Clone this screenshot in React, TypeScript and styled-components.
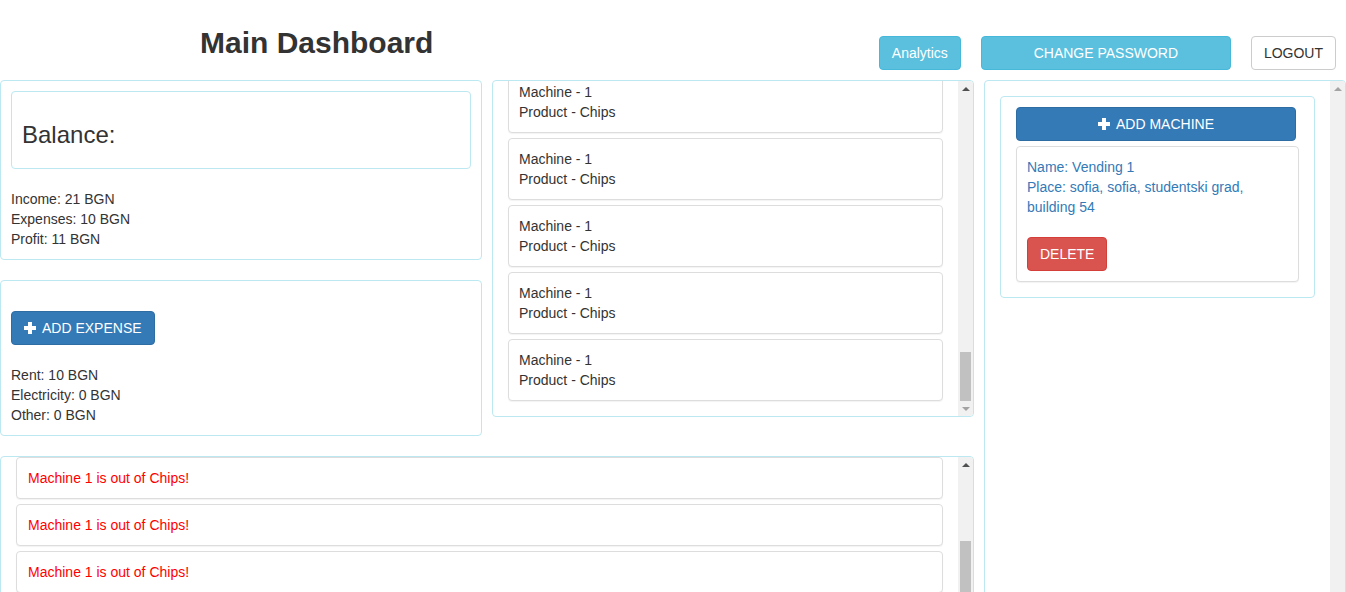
import React, { useLayoutEffect, useRef, useState } from "react";
import styled, { createGlobalStyle, css } from "styled-components";

const GlobalStyle = createGlobalStyle`
  html, body {
    margin: 0;
    padding: 0;
    overflow: hidden;
    background: #fff;
  }
  body {
    font-family: "Liberation Sans", Arial, sans-serif;
    font-size: 14px;
    line-height: 20px;
    color: #333;
  }
  * { box-sizing: border-box; }
`;

const Page = styled.div`
  width: 1346px;
`;

const Header = styled.header`
  display: flex;
  align-items: flex-start;
  height: 80px;
  padding-right: 10px;
`;

const Title = styled.h2`
  margin: 26px 0 0 200px;
  font-size: 30px;
  line-height: 33px;
  font-weight: bold;
  color: #333;
`;

const Actions = styled.div`
  margin-left: auto;
  margin-top: 36px;
  display: flex;
  gap: 20px;
`;

type Variant = "info" | "primary" | "danger" | "default";

const variants: Record<Variant, ReturnType<typeof css>> = {
  info: css`
    background: #5bc0de;
    border-color: #46b8da;
    color: #fff;
  `,
  primary: css`
    background: #337ab7;
    border-color: #2e6da4;
    color: #fff;
  `,
  danger: css`
    background: #d9534f;
    border-color: #d43f3a;
    color: #fff;
  `,
  default: css`
    background: #fff;
    border-color: #ccc;
    color: #333;
  `,
};

const Button = styled.button<{ $variant: Variant; $width?: number }>`
  display: inline-flex;
  align-items: center;
  justify-content: center;
  gap: 6px;
  height: 34px;
  padding: 6px 12px;
  border: 1px solid;
  border-radius: 4px;
  font-family: "Liberation Sans", Arial, sans-serif;
  font-size: 14px;
  line-height: 20px;
  cursor: pointer;
  white-space: nowrap;
  ${(p) => variants[p.$variant]}
  ${(p) => (p.$width ? `width: ${p.$width}px;` : "")}
`;

const Main = styled.div`
  display: grid;
  grid-template-columns: 974px 362px;
  gap: 10px;
  align-items: start;
`;

const LeftArea = styled.div`
  display: flex;
  flex-direction: column;
  gap: 20px;
`;

const TopRow = styled.div`
  display: grid;
  grid-template-columns: 482px 482px;
  gap: 10px;
  align-items: start;
`;

const Column = styled.div`
  display: flex;
  flex-direction: column;
  gap: 20px;
`;

const Panel = styled.section`
  border: 1px solid #bce8f1;
  border-radius: 4px;
  padding: 10px;
`;

const BalanceBox = styled.div`
  border: 1px solid #bce8f1;
  border-radius: 4px;
  padding: 30px 10px 20px;
`;

const BalanceTitle = styled.h3`
  margin: 0;
  font-size: 24px;
  line-height: 26px;
  font-weight: normal;
`;

const Lines = styled.div`
  margin-top: 20px;
`;

const Line = styled.div`
  line-height: 20px;
`;

const ExpenseButtonRow = styled.div`
  margin-top: 20px;
`;

/* ---------- scroll panel with a drawn classic scrollbar ---------- */

const ScrollFrame = styled.section<{ $height: number }>`
  border: 1px solid #bce8f1;
  border-radius: 4px;
  height: ${(p) => p.$height}px;
  display: flex;
  overflow: hidden;
`;

const Viewport = styled.div`
  flex: 1;
  min-width: 0;
  overflow: hidden;
`;

const ScrollBar = styled.div`
  flex: none;
  width: 15px;
  background: #f1f1f1;
  display: flex;
  flex-direction: column;
`;

const ArrowButton = styled.div<{ $disabled: boolean }>`
  flex: none;
  height: 15px;
  display: flex;
  align-items: center;
  justify-content: center;
  color: ${(p) => (p.$disabled ? "#a3a3a3" : "#505050")};
`;

const Track = styled.div`
  flex: 1;
  position: relative;
`;

const Thumb = styled.div`
  position: absolute;
  left: 2px;
  right: 2px;
  background: #c1c1c1;
`;

const Arrow = ({ dir }: { dir: "up" | "down" }) => (
  <svg width="8" height="4" viewBox="0 0 8 4" aria-hidden="true">
    <polygon points={dir === "up" ? "0,4 8,4 4,0" : "0,0 8,0 4,4"} fill="currentColor" />
  </svg>
);

type ScrollState = { top: number; height: number; canUp: boolean; canDown: boolean; show: boolean };

function ScrollPanel({
  height,
  scrollTo,
  children,
}: {
  height: number;
  scrollTo: number | "end";
  children: React.ReactNode;
}) {
  const vp = useRef<HTMLDivElement>(null);
  const track = useRef<HTMLDivElement>(null);
  const [s, setS] = useState<ScrollState>({ top: 0, height: 0, canUp: false, canDown: false, show: false });

  useLayoutEffect(() => {
    const v = vp.current;
    const t = track.current;
    if (!v || !t) return;
    const max = v.scrollHeight - v.clientHeight;
    v.scrollTop = scrollTo === "end" ? max : Math.min(scrollTo, max);
    const st = v.scrollTop;
    const tl = t.clientHeight;
    if (max <= 0) {
      setS({ top: 0, height: 0, canUp: false, canDown: false, show: false });
      return;
    }
    const th = (v.clientHeight / v.scrollHeight) * tl;
    setS({
      top: (st / v.scrollHeight) * tl,
      height: th,
      canUp: st > 0,
      canDown: st < max - 0.5,
      show: true,
    });
  }, [scrollTo]);

  return (
    <ScrollFrame $height={height}>
      <Viewport ref={vp}>{children}</Viewport>
      <ScrollBar>
        <ArrowButton $disabled={!s.canUp}>
          <Arrow dir="up" />
        </ArrowButton>
        <Track ref={track}>
          {s.show && <Thumb style={{ top: s.top, height: s.height }} />}
        </Track>
        <ArrowButton $disabled={!s.canDown}>
          <Arrow dir="down" />
        </ArrowButton>
      </ScrollBar>
    </ScrollFrame>
  );
}

const List = styled.div`
  padding: 15px;
  display: flex;
  flex-direction: column;
  gap: 5px;
`;

const Item = styled.div`
  flex: none;
  border: 1px solid #ddd;
  border-radius: 4px;
  padding: 10px;
  background: #fff;
  box-shadow: 0 1px 1px rgba(0, 0, 0, 0.05);
`;

const AlertText = styled.div`
  color: #ff0000;
  padding-left: 1px;
`;

const RightContent = styled.div`
  padding: 15px;
`;

const MachineBox = styled.div`
  border: 1px solid #bce8f1;
  border-radius: 4px;
  padding: 10px 15px 15px;
  display: flex;
  flex-direction: column;
  gap: 5px;
`;

const MachineCard = styled(Item)`
  color: #337ab7;
`;

const DeleteRow = styled.div`
  margin-top: 20px;
`;

const PlusIcon = () => (
  <svg width="12" height="12" viewBox="0 0 12 12" aria-hidden="true">
    <rect x="0" y="4" width="12" height="4" fill="currentColor" />
    <rect x="4" y="0" width="4" height="12" fill="currentColor" />
  </svg>
);

const products = Array.from({ length: 31 }, (_, i) => i);
const alerts = Array.from({ length: 8 }, (_, i) => i);

export default function App() {
  return (
    <Page>
      <GlobalStyle />
      <Header>
        <Title>Main Dashboard</Title>
        <Actions>
          <Button $variant="info">Analytics</Button>
          <Button $variant="info" $width={250}>CHANGE PASSWORD</Button>
          <Button $variant="default">LOGOUT</Button>
        </Actions>
      </Header>
      <Main>
        <LeftArea>
          <TopRow>
            <Column>
              <Panel>
                <BalanceBox>
                  <BalanceTitle>Balance:</BalanceTitle>
                </BalanceBox>
                <Lines>
                  <Line>Income: 21 BGN</Line>
                  <Line>Expenses: 10 BGN</Line>
                  <Line>Profit: 11 BGN</Line>
                </Lines>
              </Panel>
              <Panel>
                <ExpenseButtonRow>
                  <Button $variant="primary">
                    <PlusIcon />
                    ADD EXPENSE
                  </Button>
                </ExpenseButtonRow>
                <Lines>
                  <Line>Rent: 10 BGN</Line>
                  <Line>Electricity: 0 BGN</Line>
                  <Line>Other: 0 BGN</Line>
                </Lines>
              </Panel>
            </Column>
            <ScrollPanel height={337} scrollTo="end">
              <List>
                {products.map((i) => (
                  <Item key={i}>
                    <Line>Machine - 1</Line>
                    <Line>Product - Chips</Line>
                  </Item>
                ))}
              </List>
            </ScrollPanel>
          </TopRow>
          <ScrollPanel height={286} scrollTo={109}>
            <List>
              {alerts.map((i) => (
                <Item key={i}>
                  <AlertText>Machine 1 is out of Chips!</AlertText>
                </Item>
              ))}
            </List>
          </ScrollPanel>
        </LeftArea>
        <ScrollPanel height={560} scrollTo={0}>
          <RightContent>
            <MachineBox>
              <Button $variant="primary" $width={280}>
                <PlusIcon />
                ADD MACHINE
              </Button>
              <MachineCard>
                <Line>Name: Vending 1</Line>
                <Line>Place: sofia, sofia, studentski grad, building 54</Line>
                <DeleteRow>
                  <Button $variant="danger">DELETE</Button>
                </DeleteRow>
              </MachineCard>
            </MachineBox>
          </RightContent>
        </ScrollPanel>
      </Main>
    </Page>
  );
}
